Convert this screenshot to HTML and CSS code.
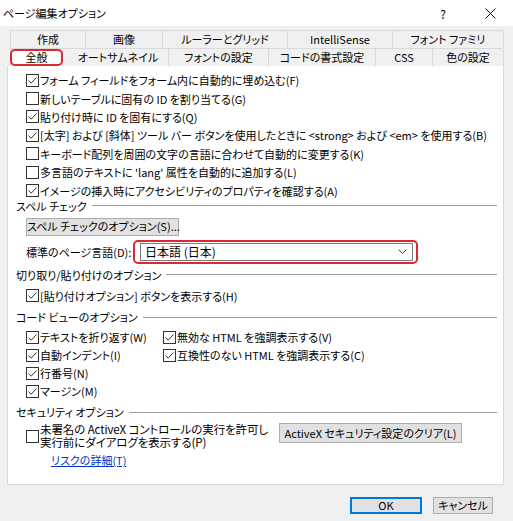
FILE: index.html
```html
<!DOCTYPE html>
<html>
<head>
<title>ページ編集オプション</title>
<meta charset="utf-8">
<link rel="stylesheet" href="styles.css">
</head>
<body>
  <div class="window">
    <div class="titlebar">
      <span class="title">ページ編集オプション</span>
      <span class="help">?</span>
      <span class="close">
        <svg width="11" height="11" viewBox="0 0 11 11"><path d="M0.5 0.5L10.5 10.5M10.5 0.5L0.5 10.5" stroke="#111" stroke-width="1" fill="none"/></svg>
      </span>
    </div>

    <div class="tabs">
      <div class="tab-row row-back">
        <div class="tab">作成</div>
        <div class="tab">画像</div>
        <div class="tab">ルーラーとグリッド</div>
        <div class="tab">IntelliSense</div>
        <div class="tab">フォント ファミリ</div>
      </div>
      <div class="tab-row row-front">
        <div class="tab tab-active">全般</div>
        <div class="tab">オートサムネイル</div>
        <div class="tab">フォントの設定</div>
        <div class="tab">コードの書式設定</div>
        <div class="tab">CSS</div>
        <div class="tab">色の設定</div>
      </div>
    </div>

    <div class="panel">
      <div class="opts">
        <label class="opt"><span class="cb"><svg viewBox="0 0 11 11"><path d="M1.5 5.5L4.2 8.2L9.5 2.5"/></svg></span>フォーム フィールドをフォーム内に自動的に埋め込む(F)</label>
        <label class="opt"><span class="cb"></span>新しいテーブルに固有の ID を割り当てる(G)</label>
        <label class="opt"><span class="cb"><svg viewBox="0 0 11 11"><path d="M1.5 5.5L4.2 8.2L9.5 2.5"/></svg></span>貼り付け時に ID を固有にする(Q)</label>
        <label class="opt"><span class="cb"><svg viewBox="0 0 11 11"><path d="M1.5 5.5L4.2 8.2L9.5 2.5"/></svg></span>[太字] および [斜体] ツール バー ボタンを使用したときに &lt;strong&gt; および &lt;em&gt; を使用する(B)</label>
        <label class="opt"><span class="cb"></span>キーボード配列を周囲の文字の言語に合わせて自動的に変更する(K)</label>
        <label class="opt"><span class="cb"></span>多言語のテキストに 'lang' 属性を自動的に追加する(L)</label>
        <label class="opt"><span class="cb"><svg viewBox="0 0 11 11"><path d="M1.5 5.5L4.2 8.2L9.5 2.5"/></svg></span>イメージの挿入時にアクセシビリティのプロパティを確認する(A)</label>
      </div>

      <div class="group-title">スペル チェック</div>
      <button class="btn btn-spell">スペル チェックのオプション(S)...</button>
      <div class="lang-row">
        <span class="lang-label">標準のページ言語(D):</span>
        <div class="lang-select">
          <div class="select-box">
            <span>日本語 (日本)</span>
            <svg width="9" height="5" viewBox="0 0 9 5"><path d="M0.5 0.5L4.5 4.5L8.5 0.5" stroke="#444" fill="none"/></svg>
          </div>
        </div>
      </div>

      <div class="group-title gap-cut">切り取り/貼り付けのオプション</div>
      <label class="opt opt-paste"><span class="cb"><svg viewBox="0 0 11 11"><path d="M1.5 5.5L4.2 8.2L9.5 2.5"/></svg></span>[貼り付けオプション] ボタンを表示する(H)</label>

      <div class="group-title gap-code">コード ビューのオプション</div>
      <div class="code-grid">
        <label class="opt"><span class="cb"><svg viewBox="0 0 11 11"><path d="M1.5 5.5L4.2 8.2L9.5 2.5"/></svg></span>テキストを折り返す(W)</label>
        <label class="opt"><span class="cb"><svg viewBox="0 0 11 11"><path d="M1.5 5.5L4.2 8.2L9.5 2.5"/></svg></span>無効な HTML を強調表示する(V)</label>
        <label class="opt"><span class="cb"><svg viewBox="0 0 11 11"><path d="M1.5 5.5L4.2 8.2L9.5 2.5"/></svg></span>自動インデント(I)</label>
        <label class="opt"><span class="cb"><svg viewBox="0 0 11 11"><path d="M1.5 5.5L4.2 8.2L9.5 2.5"/></svg></span>互換性のない HTML を強調表示する(C)</label>
        <label class="opt"><span class="cb"><svg viewBox="0 0 11 11"><path d="M1.5 5.5L4.2 8.2L9.5 2.5"/></svg></span>行番号(N)</label>
        <span></span>
        <label class="opt"><span class="cb"><svg viewBox="0 0 11 11"><path d="M1.5 5.5L4.2 8.2L9.5 2.5"/></svg></span>マージン(M)</label>
      </div>

      <div class="group-title gap-sec">セキュリティ オプション</div>
      <div class="sec-row">
        <div class="sec-left">
          <label class="sec-opt">
            <span class="cb"></span>
            <span class="sec-text">
              <span class="sec-line">未署名の ActiveX コントロールの実行を許可し</span>
              <span class="sec-line">実行前にダイアログを表示する(P)</span>
            </span>
          </label>
          <a class="risk-link" href="#">リスクの詳細(T)</a>
        </div>
        <button class="btn btn-activex">ActiveX セキュリティ設定のクリア(L)</button>
      </div>
    </div>

    <div class="footer">
      <button class="btn btn-ok">OK</button>
      <button class="btn btn-cancel">キャンセル</button>
    </div>
  </div>
</body>
</html>
```

FILE: styles.css
```css
body {
  margin: 0;
  background-color: #f0f0f0;
  font-family: "Noto Sans CJK JP", "Noto Sans", sans-serif;
  font-size: 11px;
  font-feature-settings: "palt";
  color: #000;
}

.window {
  width: 513px;
  height: 521px;
  display: flex;
  flex-direction: column;
  overflow: hidden;
}

.titlebar {
  height: 26px;
  background-color: #fff;
  display: flex;
  align-items: center;
  padding-left: 3px;
}

.title {
  flex: 1;
}

.help {
  width: 20px;
  text-align: center;
  margin-right: 14px;
  font-size: 12px;
}

.close {
  width: 46px;
  display: flex;
  justify-content: center;
}

.tabs {
  margin: 4px 0 0 10px;
  width: 493px;
}

.tab-row {
  display: grid;
  height: 18px;
  border-top: 1px solid #d9d9d9;
  border-left: 1px solid #d9d9d9;
  box-sizing: border-box;
}

.row-back {
  grid-template-columns: 75px 77px 125px 105px 111px;
}

.row-front {
  grid-template-columns: 57px 101px 100px 107px 57px 71px;
}

.tab {
  display: flex;
  align-items: center;
  justify-content: center;
  border-right: 1px solid #d9d9d9;
  box-sizing: border-box;
  white-space: nowrap;
  line-height: 1;
}

.tab-active {
  background-color: #fff;
  border: 2px solid #e0262e;
  border-radius: 5px;
  width: 53px;
  margin-left: -1px;
}

.panel {
  margin-left: 7px;
  width: 497px;
  height: 419px;
  background-color: #fff;
  border: 1px solid #d9d9d9;
  border-top: none;
  box-sizing: border-box;
  padding: 5px 6px 0 8px;
}

.opt {
  display: flex;
  align-items: center;
  height: 18.4px;
  margin-left: 10px;
  white-space: nowrap;
}

.cb {
  width: 13px;
  height: 13px;
  border: 1px solid #333;
  box-sizing: border-box;
  background-color: #fff;
  margin-right: 1px;
  flex-shrink: 0;
  display: flex;
}

.cb svg {
  width: 11px;
  height: 11px;
}

.cb path {
  stroke: #333;
  stroke-width: 1;
  fill: none;
}

.group-title {
  display: flex;
  align-items: center;
  height: 12px;
  line-height: 12px;
  gap: 5px;
  white-space: nowrap;
}

.group-title::after {
  content: "";
  flex: 1;
  border-top: 1px solid #a0a0a0;
}

.gap-cut {
  margin-top: 5px;
}

.gap-code {
  margin-top: 6px;
}

.gap-sec {
  margin-top: 6px;
}

.btn {
  font-family: inherit;
  font-size: 11px;
  font-feature-settings: "palt";
  background-color: #e1e1e1;
  border: 1px solid #adadad;
  padding: 0;
  color: #000;
  line-height: 1;
  white-space: nowrap;
  box-sizing: border-box;
}

.btn-spell {
  display: block;
  margin: 6px 0 0 10px;
  width: 153px;
  height: 18px;
}

.lang-row {
  display: flex;
  align-items: center;
  margin: 4px 0 0 10px;
}

.lang-label {
  width: 107px;
  white-space: nowrap;
}

.lang-select {
  width: 285px;
  height: 24px;
  border: 2px solid #e0262e;
  border-radius: 5px;
  padding: 1px 3px 1px 5px;
  box-sizing: border-box;
}

.select-box {
  height: 18px;
  border: 1px solid #7a7a7a;
  box-sizing: border-box;
  display: flex;
  align-items: center;
  justify-content: space-between;
  padding: 0 5px 0 4px;
  font-size: 12px;
}

.opt-paste {
  margin-top: 6px;
}

.code-grid {
  display: grid;
  grid-template-columns: 147px auto;
  grid-auto-rows: 18px;
  margin-top: 5px;
}

.code-grid .opt {
  height: 18px;
}

.code-grid .opt:nth-child(even) {
  margin-left: 0;
}

.sec-row {
  display: flex;
  align-items: flex-start;
  margin: 5px 0 0 10px;
}

.sec-left {
  width: 253px;
}

.sec-opt {
  display: flex;
  align-items: center;
}

.sec-text {
  display: flex;
  flex-direction: column;
  font-size: 11.5px;
  letter-spacing: -0.1px;
}

.sec-line {
  display: block;
  height: 13px;
  line-height: 13px;
  overflow: visible;
  white-space: nowrap;
}

.risk-link {
  display: block;
  margin: 5px 0 0 25px;
  line-height: 12px;
  color: #0033cc;
  text-decoration: underline;
}

.btn-activex {
  width: 183px;
  height: 20px;
}

.footer {
  display: flex;
  justify-content: flex-end;
  gap: 11px;
  margin-top: 12px;
  padding-right: 20px;
}

.btn-ok {
  width: 72px;
  height: 17px;
  border: 2px solid #0078d7;
}

.btn-cancel {
  width: 60px;
  height: 17px;
}
```
